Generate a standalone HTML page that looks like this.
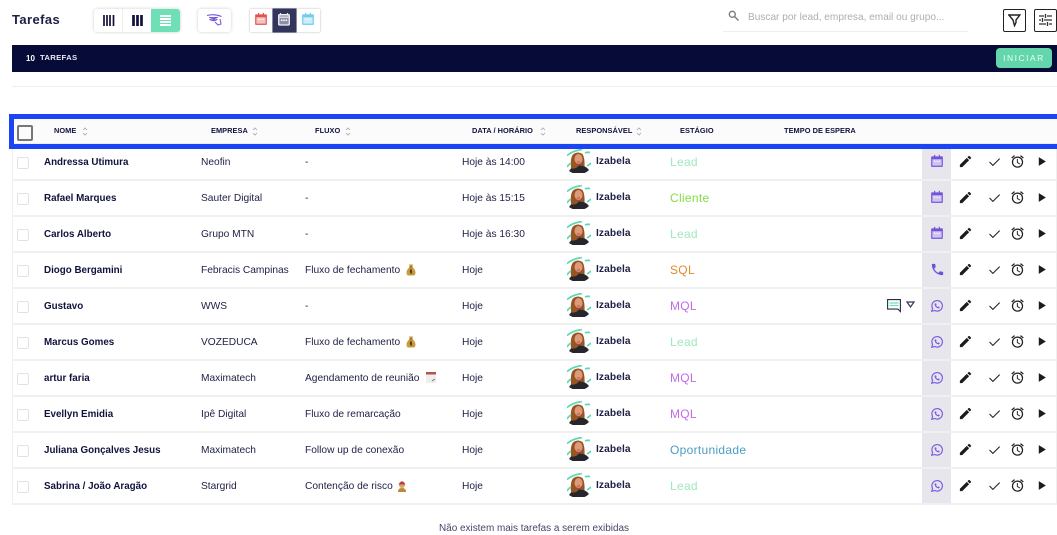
<!DOCTYPE html>
<html lang="pt"><head><meta charset="utf-8"><title>Tarefas</title>
<style>
html,body{margin:0;padding:0;background:#fff}
body{width:1057px;height:533px;position:relative;overflow:hidden;font-family:"Liberation Sans",sans-serif;color:#1d1f45;font-size:10.2px}
.a{position:absolute}
.r span,.r svg,.r i,.r .g{position:absolute}
.box{background:#fff;box-shadow:0 0 3px rgba(0,0,0,.2);border-radius:3px}
.th{position:absolute;top:126px;font-size:7.4px;font-weight:bold;color:#10123c;letter-spacing:.05px;line-height:10px;white-space:nowrap}
.th svg{position:absolute;top:1px}
.r{position:absolute;left:12px;width:1043px;height:34px;border-right:1px solid #efefef;border-left:1px solid #f0f0f0;border-bottom:2px solid #f0f0f0}
.r span{top:12px;line-height:12px;white-space:nowrap}
.r i{left:4px;top:12px;width:10px;height:10px;border:1.5px solid #e2e2e2;border-radius:2px;background:#fff}
.r .n{left:31px;font-weight:bold;font-size:9.8px;color:#10123c}
.r .e{left:188px}.r .f{left:292px}.r .d{left:449px}
.r .u{left:583px;font-weight:bold;top:11px;font-size:10.2px;letter-spacing:.1px}
.r .s{left:657px;font-size:12px;letter-spacing:.3px;top:11px}
.r .g{left:909px;top:0;width:29px;height:34px;background:#e6e6ec}
.r .av{left:554px;top:4px}.r .i1{left:917px;top:9px}
.r .pe{left:945px;top:9px;width:15px;height:15px}.r .ch{left:975px;top:10px}.r .al{left:997px;top:9px;width:15px;height:15px}.r .pl{left:1022px;top:10px}
.L{color:#9fe8c0}.C{color:#85db44}.Q{color:#e08a2a}.M{color:#c06ce6}.O{color:#4c9cc4}
</style></head><body>
<svg width="0" height="0" style="position:absolute">
<defs>
<symbol id="av" viewBox="0 0 24 24">
<path d="M2 22Q6 16 12 16T22 21Q18 25 12 25T2 22Z" fill="#26262c"/>
<path d="M4 19Q3 8 6.500 5Q11 2 15.500 5Q18 9 17.500 18Q14 15 12 16.500Q8 21 4 19Z" fill="#9a5424"/>
<ellipse cx="11.500" cy="10" rx="4" ry="5" fill="#dc9c7a"/>
<path d="M10 13h3" stroke="#c8405c" stroke-width="1"/>
<path d="M0 6.500Q5 2 15 .5M0 18Q2 15 4 14M18 4Q20 3 23 3.500M20 17Q22 16 24 14" fill="none" stroke="#5fd9b4" stroke-width="1.800"/>
</symbol>
<symbol id="cal" viewBox="0 0 24 24"><path d="M3 4h4V1.500h2V4h6V1.500h2V4h4a1 1 0 011 1v16a1 1 0 01-1 1H3a1 1 0 01-1-1V5a1 1 0 011-1z" fill="currentColor"/><rect x="4" y="9" width="16" height="11" fill="#fff" opacity=".65"/><path d="M7 11.500h2v2H7zM11 11.500h2v2h-2zM15 11.500h2v2h-2z" fill="#fff"/></symbol>
<symbol id="ph" viewBox="0 0 24 24"><path fill="#6f4fd8" d="M6.620 10.790c1.440 2.830 3.760 5.140 6.590 6.590l2.200-2.200c.27-.27.67-.36 1.020-.24 1.120.37 2.330.57 3.570.57.55 0 1 .45 1 1V20c0 .55-.45 1-1 1-9.390 0-17-7.610-17-17 0-.55.45-1 1-1h3.500c.55 0 1 .45 1 1 0 1.250.2 2.450.57 3.570.11.35.03.74-.25 1.020l-2.200 2.200z"/></symbol>
<symbol id="wa" viewBox="0 0 24 24"><path fill="none" stroke="#7b5ce0" stroke-width="2" d="M3 21l1.400-4.800A9 9 0 1 1 8 19.700z"/><path fill="#7b5ce0" d="M9 7.500c-.8.400-1.300 1.300-1 2.500.6 2.700 3.200 5.300 6 6 1.200.2 2.100-.3 2.500-1.100l-.1-1.200-2-1-1 1c-1.300-.5-2.500-1.700-3-3l.9-1-.9-2.100z"/></symbol>
<symbol id="pe" viewBox="0 0 24 24"><path fill="#1c1c1c" d="M3 17.250V21h3.750L17.810 9.940l-3.750-3.750L3 17.250zM20.710 7.040a1 1 0 000-1.410l-2.340-2.340a1 1 0 00-1.410 0l-1.830 1.830 3.750 3.750 1.830-1.830z"/></symbol>
<symbol id="ch" viewBox="0 0 24 24"><path fill="#222" d="M9 17.800L3.500 12.300l-1.400 1.400L9 20.600 22.300 7.300l-1.400-1.400z"/></symbol>
<symbol id="al" viewBox="0 0 24 24"><path fill="#1c1c1c" d="M22 5.720l-4.600-3.860-1.290 1.530 4.600 3.860L22 5.720zM7.880 3.390L6.600 1.860 2 5.710l1.290 1.530 4.590-3.850zM12.500 8H11v6l4.750 2.850.75-1.230-4-2.370V8zM12 4c-4.970 0-9 4.030-9 9s4.020 9 9 9a9 9 0 000-18zm0 16c-3.870 0-7-3.130-7-7s3.130-7 7-7 7 3.130 7 7-3.130 7-7 7z"/></symbol>
<symbol id="pl" viewBox="0 0 24 24"><path fill="#1c1c1c" d="M7 4v16l13-8z"/></symbol>
<symbol id="bag" viewBox="0 0 10 12"><path d="M3 .5h4L6.200 3Q9.500 5.500 9.500 9 9.500 11.500 7 11.500H3Q.5 11.500.5 9 .5 5.500 3.800 3z" fill="#c99a3a"/><path d="M3.500 3h3" stroke="#7a5a1c"/><path d="M6 6H4.300v1.500h1.400V9H4M5 5.200v4.600" stroke="#4a3510" stroke-width=".7" fill="none"/></symbol>
<symbol id="sort" viewBox="0 0 6 9"><path d="M1 3l2-2 2 2M1 6l2 2 2-2" fill="none" stroke="#a5a5b0" stroke-width=".8"/></symbol>
</defs></svg>

<div class="a" style="left:12px;top:12px;font-size:13px;font-weight:bold;letter-spacing:.4px;color:#1d1f45;line-height:15px">Tarefas</div>

<div class="a box" style="left:94px;top:9px;width:86px;height:23px"></div>
<div class="a" style="left:122px;top:9px;width:1px;height:23px;background:#eee"></div>
<div class="a" style="left:151px;top:9px;width:29px;height:23px;background:#6fdfb6;border-radius:0 3px 3px 0"></div>
<svg class="a" style="left:103px;top:15px" width="12" height="11"><path d="M1 0v11M4 0v11M7 0v11M10.500 0v11" stroke="#10123c" stroke-width="1.700"/></svg>
<svg class="a" style="left:132px;top:15px" width="11" height="11"><path d="M1.500 0v11M5.500 0v11M9.500 0v11" stroke="#10123c" stroke-width="2.700"/></svg>
<svg class="a" style="left:160px;top:15px" width="11" height="11"><path d="M0 1h11M0 4h11M0 7h11M0 10h11" stroke="#fff" stroke-width="2"/></svg>

<div class="a box" style="left:198px;top:9px;width:33px;height:23px"></div>
<svg class="a" style="left:207px;top:14px" width="15" height="12" fill="none" stroke="#7b5ce0" stroke-width="1.100"><path d="M0 1.500Q7 -.5 14.500 2.500M2 3.500h9M3 5.500Q7 3 10 5.500 7 8 3 5.500ZM8 8l3 3 3-1-1-5"/><circle cx="6.800" cy="5.200" r="1" fill="#7b5ce0"/></svg>

<div class="a" style="left:250px;top:9px;width:70px;height:23px;background:#fff;box-shadow:0 0 2px rgba(0,0,0,.3)"></div>
<div class="a" style="left:273px;top:9px;width:23px;height:23px;background:#33355c;box-shadow:0 0 0 .5px #10123c"></div>
<svg class="a" style="left:254px;top:12px;color:#e0524a" width="14" height="14"><use href="#cal"/></svg>
<svg class="a" style="left:277px;top:12px" width="14" height="14"><rect x="1.700" y="2.700" width="10.600" height="10.300" rx="1" fill="#8f90a8" stroke="#f0f0f4" stroke-width="1.300"/><path d="M3.500 1v2.500M10.500 1v2.500M2 5.200h10" stroke="#f0f0f4" stroke-width="1.200"/><path d="M4 7.500h1.500v1.500H4zM6.300 7.500h1.500v1.500H6.300zM8.600 7.500h1.500v1.500H8.600z" fill="#fff"/></svg>
<svg class="a" style="left:301px;top:12px;color:#6accee" width="14" height="14"><use href="#cal"/></svg>

<svg class="a" style="left:728px;top:10px" width="11" height="11" fill="none" stroke="#777" stroke-width="1.300"><circle cx="4.300" cy="4.300" r="3"/><path d="M6.500 6.500l4 4"/></svg>
<div class="a" style="left:748px;top:12px;font-size:10.100px;color:#aeaeb2;line-height:12px;white-space:nowrap">Buscar por lead, empresa, email ou grupo...</div>
<div class="a" style="left:723px;top:31px;width:245px;height:1px;background:#eee"></div>
<div class="a" style="left:1003px;top:9px;width:21px;height:21px;border:1px solid #222;border-radius:2px"></div>
<svg class="a" style="left:1008px;top:14px" width="13" height="13" fill="none" stroke="#222" stroke-width="1.400"><path d="M.8 1h11L8 6v2.500l-1.500 3.200L5 6z"/></svg>
<div class="a" style="left:1034px;top:9px;width:21px;height:21px;border:1px solid #222;border-radius:2px"></div>
<svg class="a" style="left:1039px;top:14px" width="13" height="12" stroke="#333" stroke-width="1.300"><path d="M0 2h5M8 2h5M0 6h2M5 6h8M0 10h7M10 10h3M6.500 0v4M3.500 4v4M8.500 8v4"/></svg>

<div class="a" style="left:12px;top:45px;width:1045px;height:27px;background:#070b37"></div>
<div class="a" style="left:26px;top:54px;font-size:8px;font-weight:bold;color:#fff;line-height:10px;letter-spacing:.1px">10</div>
<div class="a" style="left:40px;top:53px;font-size:7.700px;font-weight:bold;color:#e8e8f0;line-height:10px;letter-spacing:.3px">TAREFAS</div>
<div class="a" style="left:996px;top:48px;width:56px;height:20px;background:#63d6ab;border-radius:4px;color:#e6fff5;font-size:8.500px;letter-spacing:1.500px;line-height:21px;text-align:center">INICIAR</div>
<div class="a" style="left:12px;top:86px;width:1045px;height:1px;background:#eeeeee"></div>

<div class="r" style="top:145px"><i></i><span class="n">Andressa Utimura</span><span class="e">Neofin</span><span class="f">-</span><span class="d">Hoje às 14:00</span><svg class="av" width="24" height="24"><use href="#av"/></svg><span class="u">Izabela</span><span class="s L">Lead</span><div class="g"></div><svg class="i1" style="color:#7253d8" width="14" height="14"><use href="#cal"/></svg><svg class="pe" width="15" height="15"><use href="#pe"/></svg><svg class="ch" width="13" height="13"><use href="#ch"/></svg><svg class="al" width="15" height="15"><use href="#al"/></svg><svg class="pl" width="13" height="13"><use href="#pl"/></svg></div>

<div class="r" style="top:181px"><i></i><span class="n">Rafael Marques</span><span class="e">Sauter Digital</span><span class="f">-</span><span class="d">Hoje às 15:15</span><svg class="av" width="24" height="24"><use href="#av"/></svg><span class="u">Izabela</span><span class="s C">Cliente</span><div class="g"></div><svg class="i1" style="color:#7253d8" width="14" height="14"><use href="#cal"/></svg><svg class="pe" width="15" height="15"><use href="#pe"/></svg><svg class="ch" width="13" height="13"><use href="#ch"/></svg><svg class="al" width="15" height="15"><use href="#al"/></svg><svg class="pl" width="13" height="13"><use href="#pl"/></svg></div>

<div class="r" style="top:217px"><i></i><span class="n">Carlos Alberto</span><span class="e">Grupo MTN</span><span class="f">-</span><span class="d">Hoje às 16:30</span><svg class="av" width="24" height="24"><use href="#av"/></svg><span class="u">Izabela</span><span class="s L">Lead</span><div class="g"></div><svg class="i1" style="color:#7253d8" width="14" height="14"><use href="#cal"/></svg><svg class="pe" width="15" height="15"><use href="#pe"/></svg><svg class="ch" width="13" height="13"><use href="#ch"/></svg><svg class="al" width="15" height="15"><use href="#al"/></svg><svg class="pl" width="13" height="13"><use href="#pl"/></svg></div>

<div class="r" style="top:253px"><i></i><span class="n">Diogo Bergamini</span><span class="e">Febracis Campinas</span><span class="f">Fluxo de fechamento</span><svg style="left:393px;top:11px" width="10" height="12"><use href="#bag"/></svg><span class="d">Hoje</span><svg class="av" width="24" height="24"><use href="#av"/></svg><span class="u">Izabela</span><span class="s Q">SQL</span><div class="g"></div><svg class="i1" width="15" height="15"><use href="#ph"/></svg><svg class="pe" width="15" height="15"><use href="#pe"/></svg><svg class="ch" width="13" height="13"><use href="#ch"/></svg><svg class="al" width="15" height="15"><use href="#al"/></svg><svg class="pl" width="13" height="13"><use href="#pl"/></svg></div>

<div class="r" style="top:289px"><i></i><span class="n">Gustavo</span><span class="e">WWS</span><span class="f">-</span><span class="d">Hoje</span><svg class="av" width="24" height="24"><use href="#av"/></svg><span class="u">Izabela</span><span class="s M">MQL</span><svg style="left:874px;top:10px" width="14" height="14"><path d="M.6.600h12.800v12l-2.500-2.500H.6z" fill="#fff" stroke="#27294f" stroke-width="1.100"/><path d="M2.500 4h9M2.500 6.500h9" stroke="#6fdfb6" stroke-width="1.200"/></svg><svg style="left:893px;top:12px" width="9" height="7"><path d="M1 1h7L4.500 6z" fill="none" stroke="#33355c" stroke-width="1.200"/></svg><div class="g"></div><svg class="i1" style="top:10px" width="14" height="14"><use href="#wa"/></svg><svg class="pe" width="15" height="15"><use href="#pe"/></svg><svg class="ch" width="13" height="13"><use href="#ch"/></svg><svg class="al" width="15" height="15"><use href="#al"/></svg><svg class="pl" width="13" height="13"><use href="#pl"/></svg></div>

<div class="r" style="top:325px"><i></i><span class="n">Marcus Gomes</span><span class="e">VOZEDUCA</span><span class="f">Fluxo de fechamento</span><svg style="left:393px;top:11px" width="10" height="12"><use href="#bag"/></svg><span class="d">Hoje</span><svg class="av" width="24" height="24"><use href="#av"/></svg><span class="u">Izabela</span><span class="s L">Lead</span><div class="g"></div><svg class="i1" style="top:10px" width="14" height="14"><use href="#wa"/></svg><svg class="pe" width="15" height="15"><use href="#pe"/></svg><svg class="ch" width="13" height="13"><use href="#ch"/></svg><svg class="al" width="15" height="15"><use href="#al"/></svg><svg class="pl" width="13" height="13"><use href="#pl"/></svg></div>

<div class="r" style="top:361px"><i></i><span class="n">artur faria</span><span class="e">Maximatech</span><span class="f">Agendamento de reunião</span><svg style="left:413px;top:11px" width="10" height="11"><rect width="10" height="11" fill="#eee"/><rect width="10" height="2.500" fill="#b5534c"/><path d="M6 9l3-2" stroke="#777"/></svg><span class="d">Hoje</span><svg class="av" width="24" height="24"><use href="#av"/></svg><span class="u">Izabela</span><span class="s M">MQL</span><div class="g"></div><svg class="i1" style="top:10px" width="14" height="14"><use href="#wa"/></svg><svg class="pe" width="15" height="15"><use href="#pe"/></svg><svg class="ch" width="13" height="13"><use href="#ch"/></svg><svg class="al" width="15" height="15"><use href="#al"/></svg><svg class="pl" width="13" height="13"><use href="#pl"/></svg></div>

<div class="r" style="top:397px"><i></i><span class="n">Evellyn Emidia</span><span class="e">Ipê Digital</span><span class="f">Fluxo de remarcação</span><span class="d">Hoje</span><svg class="av" width="24" height="24"><use href="#av"/></svg><span class="u">Izabela</span><span class="s M">MQL</span><div class="g"></div><svg class="i1" style="top:10px" width="14" height="14"><use href="#wa"/></svg><svg class="pe" width="15" height="15"><use href="#pe"/></svg><svg class="ch" width="13" height="13"><use href="#ch"/></svg><svg class="al" width="15" height="15"><use href="#al"/></svg><svg class="pl" width="13" height="13"><use href="#pl"/></svg></div>

<div class="r" style="top:433px"><i></i><span class="n">Juliana Gonçalves Jesus</span><span class="e">Maximatech</span><span class="f">Follow up de conexão</span><span class="d">Hoje</span><svg class="av" width="24" height="24"><use href="#av"/></svg><span class="u">Izabela</span><span class="s O">Oportunidade</span><div class="g"></div><svg class="i1" style="top:10px" width="14" height="14"><use href="#wa"/></svg><svg class="pe" width="15" height="15"><use href="#pe"/></svg><svg class="ch" width="13" height="13"><use href="#ch"/></svg><svg class="al" width="15" height="15"><use href="#al"/></svg><svg class="pl" width="13" height="13"><use href="#pl"/></svg></div>

<div class="r" style="top:469px"><i></i><span class="n">Sabrina / João Aragão</span><span class="e">Stargrid</span><span class="f">Contenção de risco</span><svg style="left:384px;top:11px" width="10" height="12"><path d="M1 12Q1 8 5 8T9 12z" fill="#b98a3a"/><circle cx="5" cy="5" r="3" fill="#d9a46c"/><path d="M1.500 4.500Q5 -2 8.500 4.500z" fill="#b5443a"/></svg><span class="d">Hoje</span><svg class="av" width="24" height="24"><use href="#av"/></svg><span class="u">Izabela</span><span class="s L">Lead</span><div class="g"></div><svg class="i1" style="top:10px" width="14" height="14"><use href="#wa"/></svg><svg class="pe" width="15" height="15"><use href="#pe"/></svg><svg class="ch" width="13" height="13"><use href="#ch"/></svg><svg class="al" width="15" height="15"><use href="#al"/></svg><svg class="pl" width="13" height="13"><use href="#pl"/></svg></div>

<div class="a" style="left:0;top:0;width:1057px;height:149px;z-index:5;pointer-events:none">
<div class="a" style="left:9px;top:114px;width:1048px;height:35px;background:#1a45f5"></div>
<div class="a" style="left:14px;top:119px;width:1043px;height:25px;background:#fbfbfb;border-bottom:1px solid #eee;box-sizing:border-box"></div>
<div class="a" style="left:17px;top:125px;width:12px;height:12px;border:2px solid #777;border-radius:2px;background:#fbfbfb"></div>
<div class="th" style="left:54px">NOME<svg style="left:28px" width="6" height="9"><use href="#sort"/></svg></div>
<div class="th" style="left:211px">EMPRESA<svg style="left:41px" width="6" height="9"><use href="#sort"/></svg></div>
<div class="th" style="left:315px">FLUXO<svg style="left:30px" width="6" height="9"><use href="#sort"/></svg></div>
<div class="th" style="left:472px">DATA / HORÁRIO<svg style="left:68px" width="6" height="9"><use href="#sort"/></svg></div>
<div class="th" style="left:576px">RESPONSÁVEL<svg style="left:60px" width="6" height="9"><use href="#sort"/></svg></div>
<div class="th" style="left:680px">ESTÁGIO</div>
<div class="th" style="left:784px">TEMPO DE ESPERA</div>
</div>

<div class="a" style="left:439px;top:523px;font-size:9.950px;color:#44466a;line-height:12px;white-space:nowrap">Não existem mais tarefas a serem exibidas</div>
</body></html>
